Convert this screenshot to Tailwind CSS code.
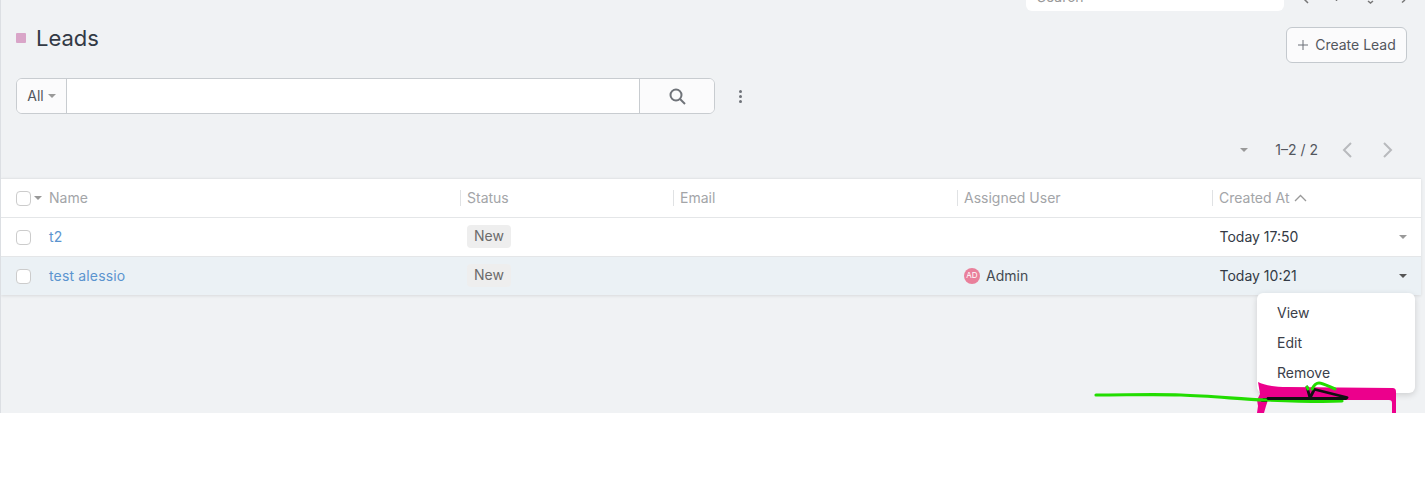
<!DOCTYPE html>
<html lang="en">
<head>
  <meta charset="UTF-8" />
  <title>Leads</title>
  <script src="https://cdn.jsdelivr.net/npm/@tailwindcss/browser@4"></script>
</head>
<body class="bg-white font-['Inter',sans-serif] text-sm text-[#333]">
  <div class="relative h-[413px] overflow-hidden bg-[#f0f2f4] border-l border-[#dcdfe3]">

    <!-- top bar remains -->
    <div class="flex h-[11px] justify-end overflow-hidden">
      <div class="h-[11px] w-[258px] rounded-b-md bg-white pl-[11px]">
        <span class="mt-[-10px] block text-[14px] leading-[14px] text-[#999]">Search</span>
      </div>
      <svg class="h-[11px] w-[141px]" viewBox="0 0 141 11" fill="none" stroke="#777" stroke-width="1.5">
        <path d="M20 -1l4 4M52.500 -1v2M84 1l2.500 2 2.500-2M118 2.500l3-2.500"/>
      </svg>
    </div>

    <!-- header -->
    <div class="flex items-start justify-between pr-[18px] pl-[15px] pt-[16px]">
      <div class="flex items-center gap-[10px]">
        <span class="h-[10px] w-[10px] rounded-[1px] bg-[#d9a5c8]"></span>
        <h1 class="text-[22px] leading-[22px] font-normal text-[#333a45]">Leads</h1>
      </div>
      <button class="flex h-[36px] w-[121px] items-center justify-center gap-[6px] rounded-[6px] border border-[#c4c9ce] bg-[#fbfbfc] text-[14px] text-[#53575e]">
        <svg class="h-[12px] w-[12px]" viewBox="0 0 12 12" fill="none" stroke="#6b6f76" stroke-width="1"><path d="M6 1v10M1 6h10"/></svg>
        Create Lead
      </button>
    </div>

    <!-- search row -->
    <div class="mt-[15px] flex items-center pl-[15px]">
      <div class="flex h-[36px] w-[699px] overflow-hidden rounded-[6px] border border-[#c8ccd0] bg-white">
        <div class="flex w-[50px] items-center justify-center gap-[4px] border-r border-[#c8ccd0] bg-[#fbfbfc] text-[14px] text-[#53575e]">
          All
          <span class="h-0 w-0 border-x-[4px] border-t-[4px] border-x-transparent border-t-[#999]"></span>
        </div>
        <div class="flex-1"></div>
        <div class="flex w-[75px] items-center justify-center border-l border-[#c8ccd0] bg-[#fbfbfc]">
          <svg class="h-[17px] w-[17px]" viewBox="0 0 17 17" fill="none" stroke="#6f7379" stroke-width="2"><circle cx="7" cy="7" r="5.500"/><path d="M11 11l5 5"/></svg>
        </div>
      </div>
      <div class="ml-[24px] flex flex-col gap-[2px]">
        <span class="h-[3px] w-[3px] rounded-full bg-[#6f7379]"></span>
        <span class="h-[3px] w-[3px] rounded-full bg-[#6f7379]"></span>
        <span class="h-[3px] w-[3px] rounded-full bg-[#6f7379]"></span>
      </div>
    </div>

    <!-- pagination -->
    <div class="mt-[26px] flex h-[20px] items-center justify-end pr-[32px] text-[14px] text-[#53575e]">
      <span class="mr-[27px] h-0 w-0 border-x-[4px] border-t-[4px] border-x-transparent border-t-[#999]"></span>
      <span>1–2 / 2</span>
      <svg class="ml-[24px] h-[16px] w-[10px]" viewBox="0 0 10 16" fill="none" stroke="#b8babd" stroke-width="2"><path d="M9 1L2 8l7 7"/></svg>
      <svg class="ml-[31px] h-[16px] w-[10px]" viewBox="0 0 10 16" fill="none" stroke="#b8babd" stroke-width="2"><path d="M1 1l7 7-7 7"/></svg>
    </div>

    <!-- table -->
    <div class="mt-[18px] mr-[4px] bg-white shadow-[0_1px_3px_rgba(0,0,0,0.1)]">
      <div class="flex h-[40px] items-center border-y border-[#e4e6e8] text-[14px] text-[#a3a5a8]">
        <div class="flex w-[459px] items-center pl-[15px]">
          <span class="h-[15px] w-[15px] rounded-[4px] border border-[#ccc] bg-white"></span>
          <span class="ml-[3px] h-0 w-0 border-x-[4px] border-t-[4px] border-x-transparent border-t-[#999]"></span>
          <span class="ml-[7px]">Name</span>
        </div>
        <div class="flex h-[16px] w-[213px] items-center border-l border-[#e0e2e4] pl-[6px]">Status</div>
        <div class="flex h-[16px] w-[284px] items-center border-l border-[#e0e2e4] pl-[6px]">Email</div>
        <div class="flex h-[16px] w-[255px] items-center border-l border-[#e0e2e4] pl-[6px]">Assigned User</div>
        <div class="flex h-[16px] flex-1 items-center gap-[4px] border-l border-[#e0e2e4] pl-[6px]">
          Created At
          <svg class="h-[8px] w-[13px]" viewBox="0 0 13 8" fill="none" stroke="#999" stroke-width="1.300"><path d="M1 7l5.500-5.500L12 7"/></svg>
        </div>
      </div>

      <div class="flex h-[39px] items-center border-b border-[#e4e6e8] text-[14px]">
        <div class="flex w-[459px] items-center pl-[15px]">
          <span class="h-[15px] w-[15px] rounded-[4px] border border-[#ccc] bg-white"></span>
          <a class="ml-[18px] tracking-[0.15px] text-[#5b94cf]">t2</a>
        </div>
        <div class="w-[213px] pl-[7px]"><span class="mt-[-2px] inline-block h-[23px] rounded-[4px] bg-[#eeeeee] px-[7px] text-[14px] leading-[22px] text-[#6b6b6b]">New</span></div>
        <div class="w-[284px]"></div>
        <div class="w-[255px]"></div>
        <div class="flex flex-1 items-center justify-between pr-[14px] pl-[7.500px] text-[#333a45]">
          Today 17:50
          <span class="h-0 w-0 border-x-[4px] border-t-[4px] border-x-transparent border-t-[#999]"></span>
        </div>
      </div>

      <div class="flex h-[38px] items-center bg-[#ebf1f5] text-[14px]">
        <div class="flex w-[459px] items-center pl-[15px]">
          <span class="h-[15px] w-[15px] rounded-[4px] border border-[#ccc] bg-white"></span>
          <a class="ml-[18px] tracking-[0.15px] text-[#5b94cf]">test alessio</a>
        </div>
        <div class="w-[213px] pl-[7px]"><span class="mt-[-2px] inline-block h-[23px] rounded-[4px] bg-[#eeeeee] px-[7px] text-[14px] leading-[22px] text-[#6b6b6b]">New</span></div>
        <div class="w-[284px]"></div>
        <div class="flex w-[255px] items-center gap-[6px] pl-[7px] text-[#444a52]">
          <span class="flex h-[16px] w-[16px] items-center justify-center rounded-full bg-[#e9809b] text-[8px] text-white">AD</span>
          Admin
        </div>
        <div class="flex flex-1 items-center justify-between pr-[14px] pl-[7.500px] text-[#333a45]">
          Today 10:21
          <span class="h-0 w-0 border-x-[4px] border-t-[4px] border-x-transparent border-t-[#555]"></span>
        </div>
      </div>
    </div>

    <!-- row menu -->
    <div class="absolute top-[293px] left-[1256px] flex h-[100px] w-[158px] flex-col rounded-[6px] bg-white py-[5px] pl-[20px] text-[14px] leading-[30px] text-[#3b4049] shadow-[0_2px_6px_rgba(0,0,0,0.15)]">
      <span>View</span>
      <span>Edit</span>
      <span>Remove</span>
    </div>

    <!-- hand drawn annotation on the screenshot -->
    <svg class="absolute top-0 left-[-1px] h-[413px] w-[1425px]" viewBox="0 0 1425 413" fill="none" stroke-linecap="round" stroke-linejoin="round">
      <path d="M1258 382c6 3 16 5 30 5l104 1c3 0 4 1 4 4v21h-4v-10c0-2-1-3-3-3h-121l-2 6-2 7h-7l1-7-1-6 3-6z" fill="#ec008c"/>
      <path d="M1263 398h5l-1 4h-6z" fill="#111"/>
      <path d="M1096 395c30 0 60-1 85 0 30 1 60 4 85 5 25 1 55 2 76 1" stroke="#22dd00" stroke-width="3.200"/>
      <path d="M1268 398.500h78l1-1-32-8M1307 387l3 11 4-8" stroke="#111" stroke-width="2.800"/>
      <path d="M1307 387l1 2M1312 389c2-4 4-6 7-6 4 0 9 3 16 6" stroke="#22dd00" stroke-width="3"/>
    </svg>
  </div>
</body>
</html>
